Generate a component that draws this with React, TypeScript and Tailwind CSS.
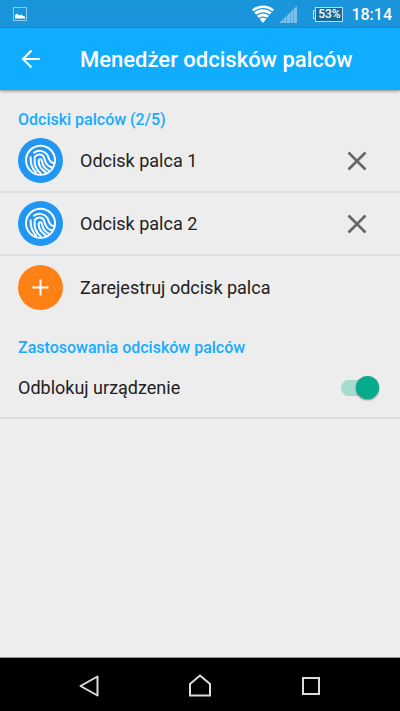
import React, { useState } from "react";

interface IconProps {
  className?: string;
}

interface Fingerprint {
  id: number;
  name: string;
}

const MAX_FINGERPRINTS = 5;

const FingerprintIcon = ({ className }: IconProps) => (
  <svg
    viewBox="0 0 135 135"
    fill="none"
    stroke="currentColor"
    strokeWidth="6"
    strokeLinecap="round"
    className={className}
    aria-hidden="true"
  >
    <circle cx="67.5" cy="67" r="43.5" />
    <path d="M48 44C60 35 77 37 87 49C94 59 90 72 108 76" />
    <path d="M38 58C37 76 42 91 54 103" />
    <path d="M50 63C48 79 55 95 68 106" />
    <path d="M50 57C59 46 75 47 79 61C82 76 87 84 101 88" />
    <path d="M83 103C68 93 62 81 62 70C62 61 71 62 72 70C74 82 80 91 91 97" />
  </svg>
);

const WifiIcon = ({ className }: IconProps) => (
  <svg viewBox="0 0 22 18" className={className} aria-hidden="true">
    <path d="M0 4.5C6-1 16-1 22 4.5L11 18Z" fill="#fff" />
    <g fill="none" stroke="#1a94da" strokeWidth="1.3">
      <path d="M1.5 7.2C7 2.3 15 2.3 20.5 7.2" />
      <path d="M4 10.6C8 7 14 7 18 10.6" />
      <path d="M6.5 13.8C9 11.6 13 11.6 15.5 13.8" />
    </g>
  </svg>
);

const SignalIcon = ({ className }: IconProps) => (
  <svg viewBox="0 0 17 17" fill="#7cc1ea" className={className} aria-hidden="true">
    <path d="M0 17V16L3 13.5V17Z" />
    <path d="M3.5 17V12.5L6.5 10V17Z" />
    <path d="M7 17V9.5L10 6.5V17Z" />
    <path d="M10.5 17V6L13.5 3V17Z" />
    <path d="M14 17V2.5L17 0V17Z" />
  </svg>
);

const StatusBar = () => (
  <div className="flex h-7 items-center bg-[#1a94da] pr-2 pl-[13px] text-white">
    <svg viewBox="0 0 14 14" className="size-[14px]" aria-hidden="true">
      <rect x="0.5" y="0.5" width="13" height="13" fill="none" stroke="#8ccbf0" />
      <path d="M2 11.5V8L4 6.5L6 8.5L8 7.5L10 9L12 9.5V11.5Z" fill="#fff" />
    </svg>
    <WifiIcon className="ml-auto h-[18px] w-[22px]" />
    <SignalIcon className="ml-[6px] size-[17px]" />
    <div className="ml-4 flex items-center">
      <span className="h-[9px] w-[2px] border border-r-0 border-[#b9dff4]" />
      <span className="flex h-[15px] w-7 items-center justify-center border border-[#b9dff4] bg-[#176b9b] text-[12px] font-medium">
        53%
      </span>
    </div>
    <span className="ml-2 pt-px text-[16px] font-medium">18:14</span>
  </div>
);

const SectionTitle = ({ children }: { children: React.ReactNode }) => (
  <h2 className="px-[18px] text-[16px] leading-5 font-medium text-[#18abff]">
    {children}
  </h2>
);

const App = () => {
  const [fingerprints, setFingerprints] = useState<Fingerprint[]>([
    { id: 1, name: "Odcisk palca 1" },
    { id: 2, name: "Odcisk palca 2" },
  ]);
  const [unlock, setUnlock] = useState(true);

  const addFingerprint = () => {
    if (fingerprints.length >= MAX_FINGERPRINTS) return;
    const id = Math.max(0, ...fingerprints.map((item) => item.id)) + 1;
    setFingerprints([...fingerprints, { id, name: `Odcisk palca ${id}` }]);
  };

  return (
    <div className="flex min-h-screen flex-col bg-[#ededed] font-[Roboto,sans-serif] text-[#212121]">
      <StatusBar />
      <header className="flex h-[62px] items-center bg-[#10adff] pl-[18px] text-white shadow-[0_1px_3px_rgba(0,0,0,0.45)]">
        <button type="button" aria-label="Wstecz" className="w-[62px]">
          <svg
            viewBox="0 0 26 26"
            fill="none"
            stroke="currentColor"
            strokeWidth="2"
            className="size-[26px]"
            aria-hidden="true"
          >
            <path d="M22 13H5.5M13.5 4.5L5 13L13.5 21.5" />
          </svg>
        </button>
        <h1 className="pt-px text-[22px] leading-7 font-medium">
          Menedżer odcisków palców
        </h1>
      </header>

      <main className="grow pt-5">
        <SectionTitle>{`Odciski palców (${fingerprints.length}/${MAX_FINGERPRINTS})`}</SectionTitle>
        <ul>
          {fingerprints.map((item) => (
            <li
              key={item.id}
              className="flex h-[63px] items-center border-b-2 border-[#dfdfdf] pr-[30px] pl-[18px]"
            >
              <span className="rounded-full bg-[#2296f3] text-white">
                <FingerprintIcon className="size-[45px]" />
              </span>
              <span className="ml-[17px] grow text-[18px]">{item.name}</span>
              <button
                type="button"
                aria-label={`Usuń ${item.name}`}
                onClick={() =>
                  setFingerprints(fingerprints.filter((f) => f.id !== item.id))
                }
              >
                <svg
                  viewBox="0 0 26 26"
                  stroke="#666"
                  strokeWidth="2.6"
                  className="size-[26px]"
                  aria-hidden="true"
                >
                  <path d="M4.5 4.5L21.5 21.5M21.5 4.5L4.5 21.5" />
                </svg>
              </button>
            </li>
          ))}
        </ul>
        <button
          type="button"
          onClick={addFingerprint}
          className="flex h-[62px] w-full items-center px-[18px]"
        >
          <span className="rounded-full bg-[#ff8116] text-white">
            <svg
              viewBox="0 0 45 45"
              stroke="currentColor"
              strokeWidth="2"
              className="size-[45px]"
              aria-hidden="true"
            >
              <path d="M22.5 14.5V30.5M14.5 22.5H30.5" />
            </svg>
          </span>
          <span className="ml-[17px] text-[18px]">Zarejestruj odcisk palca</span>
        </button>

        <div className="pt-5">
          <SectionTitle>Zastosowania odcisków palców</SectionTitle>
        </div>
        <label className="flex h-[61px] items-center border-b-2 border-[#dfdfdf] pr-[21px] pl-[18px]">
          <span className="grow text-[18px]">Odblokuj urządzenie</span>
          <input
            type="checkbox"
            role="switch"
            checked={unlock}
            onChange={() => setUnlock(!unlock)}
            className="peer sr-only"
          />
          <span className="flex h-4 w-[38px] items-center rounded-full bg-[#bdbdbd] peer-checked:justify-end peer-checked:bg-[#a5dbd0] peer-checked:*:bg-[#05ab8a]">
            <span className="size-[23px] rounded-full bg-white shadow-[0_1px_2px_rgba(0,0,0,0.45)]" />
          </span>
        </label>
      </main>

      <nav className="flex h-[54px] items-center justify-center gap-[85px] border-t border-[#999] bg-black pt-[2px] text-[#ddd]">
        <button type="button" aria-label="Cofnij">
          <svg viewBox="0 0 26 26" fill="none" stroke="currentColor" strokeWidth="2" strokeLinejoin="round" className="size-[26px]">
            <path d="M21.5 3.5V22.5L4.5 13Z" />
          </svg>
        </button>
        <button type="button" aria-label="Ekran główny">
          <svg viewBox="0 0 26 26" fill="none" stroke="currentColor" strokeWidth="2" className="size-[26px]">
            <path d="M3 11L13 2.5L23 11V22.5H3Z" />
          </svg>
        </button>
        <button type="button" aria-label="Ostatnie aplikacje">
          <svg viewBox="0 0 26 26" fill="none" stroke="currentColor" strokeWidth="2" className="size-[26px]">
            <rect x="5" y="5" width="16" height="16" />
          </svg>
        </button>
      </nav>
    </div>
  );
};

export default App;
